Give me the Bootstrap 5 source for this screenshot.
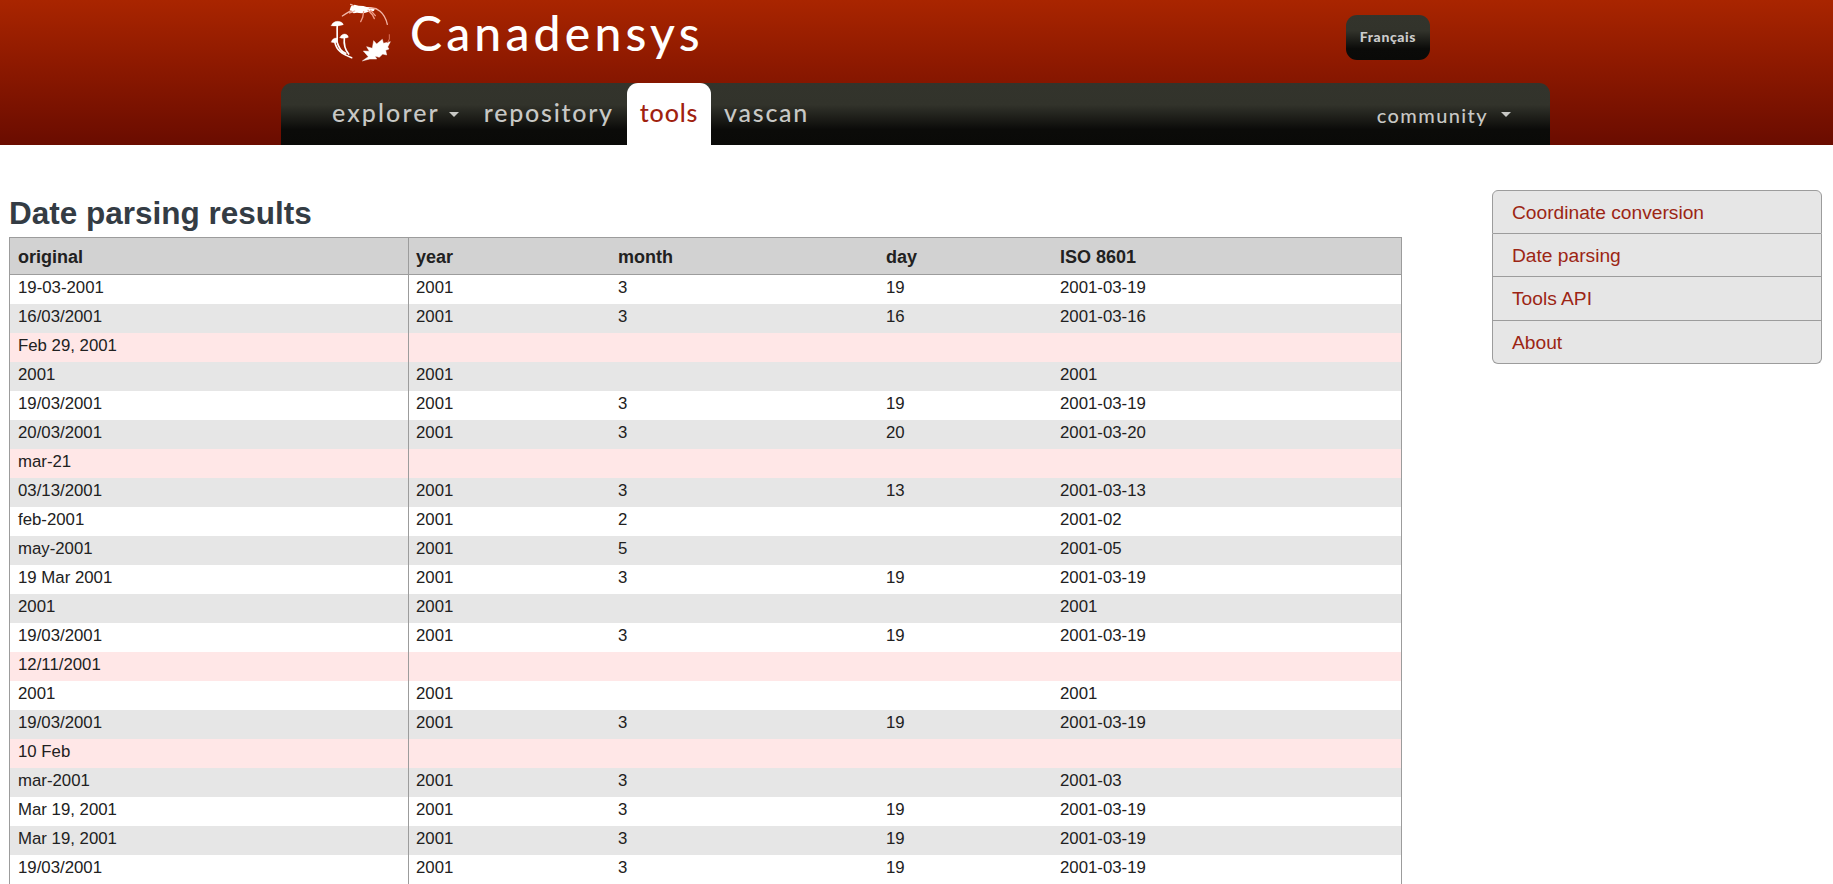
<!DOCTYPE html>
<html lang="en">
<head>
<meta charset="utf-8">
<title>Canadensys - Date parsing</title>
<link rel="stylesheet" href="https://cdn.jsdelivr.net/npm/bootstrap@5.3.0/dist/css/bootstrap.min.css">
<style>
body{font-family:"Liberation Sans",Arial,sans-serif;font-size:16.8px;color:#212121;overflow:hidden;height:884px;background:#fff}
.site-header{height:145px;background:linear-gradient(#a92500,#8d1900 45%,#6a0c00)}
.wrap{width:1269px;margin-left:281px}
.brand-row{height:83px}
.site-logo{width:80px;height:65px;margin-left:39px}
.site-name,.main-nav,.lang-btn{font-family:Lato,sans-serif}
.site-name{font-size:48px;line-height:58px;letter-spacing:4.2px;color:#fff;margin:4px 0 0 10px;height:58px;font-weight:500}
.dark-grad{background:linear-gradient(#33342c,#32332b 35%,#0b0b09 75%,#0a0a08)}
.lang-btn{width:84px;height:45px;border-radius:11px;color:#ccc;font-weight:900;font-size:14px;letter-spacing:.6px;line-height:43px;margin:15px 120px 0 0;padding:0 0 2px}
.main-nav{height:62px;border-radius:11px 11px 0 0;padding:0 26px 0 38px}
.main-nav .nav-link{color:#c8c8c5;font-size:25px;font-weight:500;line-height:59px;height:62px;padding:0 13px;letter-spacing:1.75px;white-space:nowrap}
.main-nav .nav-link.explorer-link{letter-spacing:2.1px;margin-right:-1px}
.main-nav .nav-link.active{background:#fff;color:#a0220f;border-radius:11px 11px 0 0;letter-spacing:.8px}
.main-nav .nav-link.small-link{font-size:20px;line-height:65px;letter-spacing:1.4px}
.main-nav .dropdown-toggle::after{border-width:5px 5px 0;margin-left:9px;vertical-align:5px}
.main-nav .small-link.dropdown-toggle::after{margin-left:13px;vertical-align:6px}
.content{padding:45px 11px 0 9px}
.results{width:1393px}
h1{font-size:31.5px;font-weight:700;color:#343c44;line-height:47px;margin:0}
.date-table{table-layout:fixed;border:1px solid #9c9c9c;border-collapse:separate;border-spacing:0;width:1393px}
.date-table th,.date-table td{padding:0 7px;height:29px;line-height:25px;vertical-align:top}
.date-table th{height:37px;line-height:33px;padding-top:3px;font-size:18px;background:#d2d2d2;border-bottom:1px solid #9c9c9c}
.date-table th:first-child,.date-table td:first-child{border-right:1px solid #9c9c9c;padding-left:8px}
.date-table tbody tr:nth-child(even){background:#e6e6e6}
.date-table tbody tr.failed{background:#ffe7e7}
.side{width:330px}
.side .list-group-item{background:#e6e6e6;color:#9c2514;border-color:#9c9c9c;font-size:19.2px;padding:0 19px;height:43.5px;line-height:43px}
.side .list-group{border-radius:6px}
</style>
</head>
<body>
<header class="site-header">
  <div class="wrap">
    <div class="brand-row d-flex align-items-start">
      <svg class="site-logo" viewBox="0 0 240 195" fill="#fff" stroke="#fff" stroke-linecap="round" stroke-linejoin="round">
        <path d="M89 30l4-11 11-5 12 3 14 1 10 3 13 1 11 5-2 6-16 2-12 4-10 1-13-2-10 2z" stroke="none"/>
        <path d="M93 32L78 41l-11 7M100 17l-8-4M104 33l-15 6M148 25c22-5 46 12 54 48" fill="none" stroke="#f0b5a6" stroke-width="4"/>
        <path d="M131 35l-3 17-6 13M144 31l13 13 6 12M152 31l14 16" fill="none" stroke="#ef9c87" stroke-width="4"/>
        <path d="M34 77c2-8 10-13 19-13s16 5 17 10c-12 4-26 5-36 3zM34 126c2-9 9-13 17-12l2 12c-7 3-14 3-19 0zM60 113c2-7 8-11 14-11s11 5 11 10c-7 3-18 4-25 1z"/>
        <path d="M52 74c-2 18 1 35-1 51 5 19 14 30 26 35M73 113c-2 20 0 34 13 49M44 124c5 27 21 38 51 49" fill="none" stroke-width="5"/>
        <path d="M128 182L145 170 130 153 148 154 140 140 157 145 161 122 170 132 187 118 190 130 211 125 203 141 207 147 197 151 200 165 188 162 178 172 165 168 170 177 150 177z" stroke-width="1.5"/>
        <path d="M203 128l5-11 0-13" fill="none" stroke="#dc715a" stroke-width="3"/>
      </svg>
      <div class="site-name">Canadensys</div>
      <button class="lang-btn dark-grad btn border-0 ms-auto" type="button">Français</button>
    </div>
    <nav class="main-nav dark-grad nav d-flex flex-nowrap">
      <a class="nav-link explorer-link dropdown-toggle" href="#">explorer</a>
      <a class="nav-link" href="#">repository</a>
      <a class="nav-link active" href="#">tools</a>
      <a class="nav-link" href="#">vascan</a>
      <a class="nav-link small-link dropdown-toggle ms-auto" href="#">community</a>
    </nav>
  </div>
</header>
<main class="content d-flex justify-content-between align-items-start">
  <section class="results">
    <h1>Date parsing results</h1>
    <table class="date-table">
      <colgroup><col style="width:399px"><col style="width:202px"><col style="width:268px"><col style="width:174px"><col></colgroup>
      <thead><tr><th>original</th><th>year</th><th>month</th><th>day</th><th>ISO 8601</th></tr></thead>
      <tbody>
        <tr><td>19-03-2001</td><td>2001</td><td>3</td><td>19</td><td>2001-03-19</td></tr>
        <tr><td>16/03/2001</td><td>2001</td><td>3</td><td>16</td><td>2001-03-16</td></tr>
        <tr class="failed"><td>Feb 29, 2001</td><td></td><td></td><td></td><td></td></tr>
        <tr><td>2001</td><td>2001</td><td></td><td></td><td>2001</td></tr>
        <tr><td>19/03/2001</td><td>2001</td><td>3</td><td>19</td><td>2001-03-19</td></tr>
        <tr><td>20/03/2001</td><td>2001</td><td>3</td><td>20</td><td>2001-03-20</td></tr>
        <tr class="failed"><td>mar-21</td><td></td><td></td><td></td><td></td></tr>
        <tr><td>03/13/2001</td><td>2001</td><td>3</td><td>13</td><td>2001-03-13</td></tr>
        <tr><td>feb-2001</td><td>2001</td><td>2</td><td></td><td>2001-02</td></tr>
        <tr><td>may-2001</td><td>2001</td><td>5</td><td></td><td>2001-05</td></tr>
        <tr><td>19 Mar 2001</td><td>2001</td><td>3</td><td>19</td><td>2001-03-19</td></tr>
        <tr><td>2001</td><td>2001</td><td></td><td></td><td>2001</td></tr>
        <tr><td>19/03/2001</td><td>2001</td><td>3</td><td>19</td><td>2001-03-19</td></tr>
        <tr class="failed"><td>12/11/2001</td><td></td><td></td><td></td><td></td></tr>
        <tr><td>2001</td><td>2001</td><td></td><td></td><td>2001</td></tr>
        <tr><td>19/03/2001</td><td>2001</td><td>3</td><td>19</td><td>2001-03-19</td></tr>
        <tr class="failed"><td>10 Feb</td><td></td><td></td><td></td><td></td></tr>
        <tr><td>mar-2001</td><td>2001</td><td>3</td><td></td><td>2001-03</td></tr>
        <tr><td>Mar 19, 2001</td><td>2001</td><td>3</td><td>19</td><td>2001-03-19</td></tr>
        <tr><td>Mar 19, 2001</td><td>2001</td><td>3</td><td>19</td><td>2001-03-19</td></tr>
        <tr><td>19/03/2001</td><td>2001</td><td>3</td><td>19</td><td>2001-03-19</td></tr>
      </tbody>
    </table>
  </section>
  <aside class="side">
    <div class="list-group">
      <a class="list-group-item" href="#">Coordinate conversion</a>
      <a class="list-group-item" href="#">Date parsing</a>
      <a class="list-group-item" href="#">Tools API</a>
      <a class="list-group-item" href="#">About</a>
    </div>
  </aside>
</main>
<script src="https://cdn.jsdelivr.net/npm/bootstrap@5.3.0/dist/js/bootstrap.bundle.min.js"></script>
</body>
</html>
